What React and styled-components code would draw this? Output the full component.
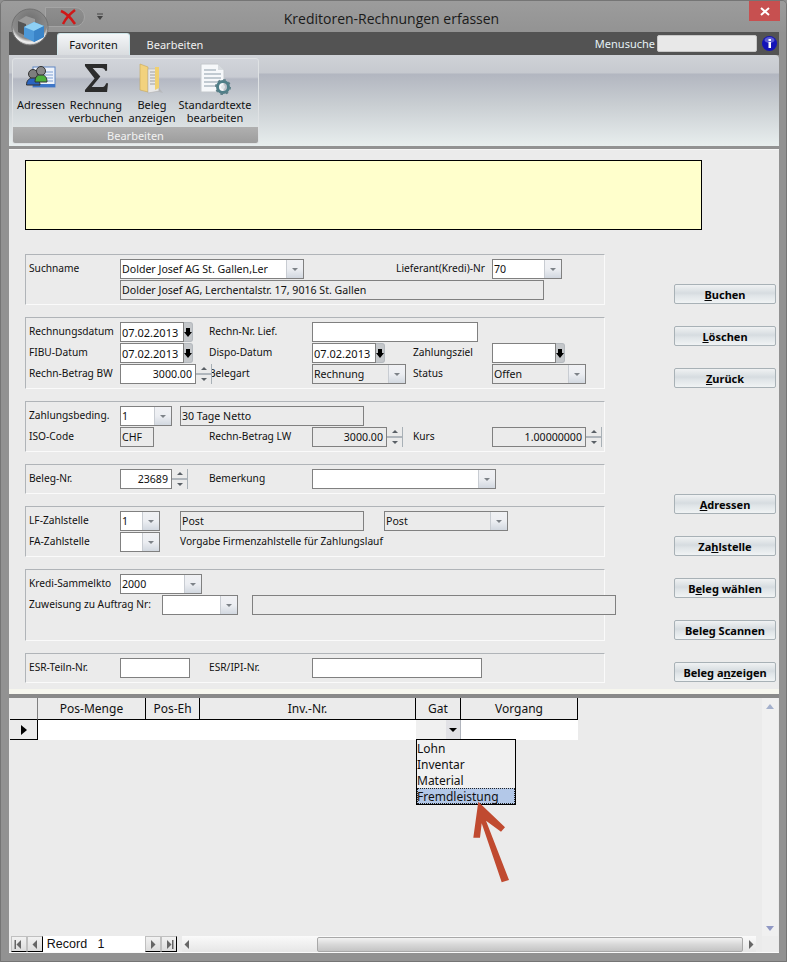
import React from 'react';
import styled, { createGlobalStyle } from 'styled-components';

const Global = createGlobalStyle`
  html, body { margin: 0; padding: 0; background: #8f8f8f; }
  * { box-sizing: border-box; }
  body { font-family: "Noto Sans", "DejaVu Sans", sans-serif; font-size: 11px; color: #111; }
`;

const Window = styled.div`
  position: relative;
  width: 787px;
  height: 962px;
  overflow: hidden;
  display: flex;
  flex-direction: column;
  background: #929292;
  border: 1px solid #757575;
  border-radius: 5px 5px 0 0;
  padding-bottom: 8px;
`;

// title bar
const TitleBar = styled.div`
  height: 31px;
  flex: none;
  display: grid;
  grid-template-columns: 1fr auto 1fr;
  align-items: start;
  background: linear-gradient(#9c9c9c, #939393);
`;
const QuickBar = styled.div`
  display: flex;
  align-items: center;
  gap: 11px;
  padding: 6px 0 0 44px;
`;
const QuickPill = styled.div`
  width: 40px;
  height: 20px;
  border: 1px solid #a4a4a4;
  border-radius: 0 10px 10px 0;
  background: linear-gradient(#8e8e8e, #848484);
  display: flex;
  align-items: center;
  justify-content: flex-end;
  padding-right: 7px;
`;
const Title = styled.div`
  padding: 8px 4px 0 0;
  font-family: "Open Sans", "Noto Sans", sans-serif;
  font-size: 14px;
  line-height: 19px;
  color: #1a1a1a;
`;
const CloseBox = styled.div`
  justify-self: end;
  width: 31px;
  height: 20px;
  margin-right: 6px;
  background: #c75050;
  display: flex;
  align-items: center;
  justify-content: center;
`;
const Orb = styled.svg`
  position: absolute;
  left: 10px;
  top: 6px;
  z-index: 2;
`;

// ribbon
const Chrome = styled.div`
  flex: 1;
  min-height: 0;
  margin: 0 7px 0 8px;
  display: flex;
  flex-direction: column;
`;
const TabStrip = styled.div`
  height: 23px;
  flex: none;
  background: #535353;
  display: flex;
  align-items: flex-end;
  padding-left: 48px;
`;
const Tab = styled.div`
  height: 22px;
  width: ${p => p.$w}px;
  display: flex;
  align-items: center;
  justify-content: center;
  border-radius: 3px 3px 0 0;
  color: ${p => (p.$active ? '#111' : '#f0f0f0')};
  background: ${p => (p.$active ? 'linear-gradient(#f4f6f8, #d9dcdf)' : 'none')};
  border: ${p => (p.$active ? '1px solid #cfe6ea' : '0')};
  border-bottom: 0;
  margin-right: ${p => (p.$active ? '8px' : '0')};
`;
const Search = styled.div`
  margin: 0 0 0 auto;
  align-self: center;
  display: flex;
  align-items: center;
  color: #e6f2f6;
  padding-right: 2px;
`;
const SearchInput = styled.div`
  width: 100px;
  height: 17px;
  margin: 0 5px 0 2px;
  background: #e8e8e8;
  border: 1px solid #c8c8c8;
  border-radius: 2px;
`;
const Ribbon = styled.div`
  height: 91px;
  flex: none;
  padding: 3px 0 0 3px;
  background: linear-gradient(#cfd2d7 0, #c6c9cf 18px, #b2b6c0 19px, #c9ced2 50px, #e8eeee 100%);
  border-radius: 0 4px 0 0;
`;
const RibbonGroup = styled.div`
  width: 247px;
  height: 86px;
  display: flex;
  flex-direction: column;
  border: 1px solid #dfe2e4;
  border-radius: 3px;
  overflow: hidden;
  background: linear-gradient(#d1d4da 0, #c8cbd2 18px, #b4b8c3 20px, #cdd2d6 45px, #e6ecec 100%);
`;
const RibbonItems = styled.div`
  flex: 1;
  display: grid;
  grid-template-columns: 56px 54px 58px 68px;
`;
const RibbonItem = styled.div`
  display: flex;
  flex-direction: column;
  align-items: center;
  text-align: center;
  color: #111;
`;
const RibbonIcon = styled.div`
  height: 39px;
  padding-top: ${p => p.$top || 4}px;
`;
const RibbonLine = styled.span`
  display: block;
  height: 13px;
  line-height: 13px;
  white-space: nowrap;
`;
const RibbonCaption = styled.div`
  height: 16px;
  flex: none;
  display: flex;
  align-items: center;
  justify-content: center;
  color: #f2f2f2;
  background: linear-gradient(#b0b0b0, #9d9d9d);
`;

// body
const Body = styled.div`
  flex: 1;
  min-height: 0;
  margin-top: 3px;
  display: flex;
  flex-direction: column;
  background: #ebebeb;
  border-top: 1px solid #f6f6f6;
  border-bottom: 1px solid #fafafa;
`;
const FormArea = styled.div`
  height: 544px;
  flex: none;
  padding: 10px 0 0 16px;
  border-bottom: 5px solid #f6f6ee;
`;
const Notice = styled.div`
  width: 677px;
  height: 70px;
  background: #ffffcc;
  border: 1px solid #000;
  margin-bottom: 24px;
`;
const FormColumns = styled.div`
  display: flex;
`;
const Groups = styled.div`
  width: 580px;
  display: flex;
  flex-direction: column;
  gap: 12px;
`;
const Group = styled.div`
  display: flex;
  flex-direction: column;
  gap: 1px;
  padding: 4px 0 4px 3px;
  min-height: ${p => p.$min || 0}px;
  border-top: 1px solid #b0b4b8;
  border-left: 1px solid #b0b4b8;
  border-right: 1px solid #fafafa;
  border-bottom: 1px solid #fafafa;
`;
const Row = styled.div`
  height: 20px;
  display: grid;
  grid-template-columns: 91px 89px 103px 101px 79px 112px;
  align-items: center;
`;
const Label = styled.div`
  grid-column: ${p => p.$col || 'auto'};
  align-self: center;
  padding: 0 ${p => p.$padRight || 0}px 3px 0;
  font-size: 10.2px;
  white-space: nowrap;
  line-height: 14px;
  text-align: ${p => (p.$right ? 'right' : 'left')};
`;
const Cell = styled.div`
  grid-column: ${p => p.$col || 'auto'};
  display: flex;
  align-items: stretch;
  height: 20px;
  gap: ${p => p.$gap || 0}px;
  padding-left: ${p => p.$pad || 0}px;
`;
const Box = styled.div`
  width: ${p => p.$w}px;
  height: 20px;
  flex: none;
  display: flex;
  align-items: center;
  justify-content: ${p => (p.$right ? 'flex-end' : 'flex-start')};
  padding: 0 3px 0 1px;
  border: 1px solid #808080;
  background: ${p => (p.$grey ? '#ebebeb' : '#fff')};
  font-size: ${p => (p.$date ? 11 : 10.6)}px;
  white-space: nowrap;
  overflow: hidden;
`;
const ComboWrap = styled.div`
  width: ${p => p.$w}px;
  height: 20px;
  flex: none;
  display: flex;
  border: 1px solid #808080;
  background: ${p => (p.$grey ? '#ebebeb' : '#fff')};
  font-size: 10.6px;
`;
const ComboText = styled.div`
  flex: 1;
  min-width: 0;
  padding-left: 1px;
  display: flex;
  align-items: center;
  white-space: nowrap;
  overflow: hidden;
`;
const ComboBtn = styled.div`
  width: 17px;
  flex: none;
  display: flex;
  align-items: center;
  justify-content: center;
  background: linear-gradient(#f0f1f4, #eceef2 50%, #d2d8e0);
  border-left: 1px solid #c8ccd2;
`;
const Caret = styled.span`
  width: 0;
  height: 0;
  border-left: 3px solid transparent;
  border-right: 3px solid transparent;
  border-top: 3px solid #7d8288;
`;
const DateBtn = styled.div`
  width: 9px;
  height: 20px;
  flex: none;
  display: flex;
  align-items: center;
  justify-content: center;
  background: #c4c7ca;
  border: 1px solid #b4b9be;
  border-left: 0;
  border-radius: 0 3px 3px 0;
`;
const SpinBox = styled.div`
  position: relative;
  z-index: 1;
  width: 16px;
  height: 20px;
  flex: none;
  display: flex;
  flex-direction: column;
  background: #ebebeb;
  border-right: 1px solid #a8b0b6;
`;
const SpinPart = styled.div`
  flex: 1;
  display: flex;
  align-items: center;
  justify-content: center;
  & + & { border-top: 2px solid #b0b6bc; }
`;
const Tri = styled.span`
  width: 0;
  height: 0;
  border-left: 3px solid transparent;
  border-right: 3px solid transparent;
  ${p => (p.$up ? 'border-bottom: 3px solid #5a6066;' : 'border-top: 3px solid #5a6066;')}
`;
const Buttons = styled.div`
  margin: 30px 0 0 69px;
  width: 102px;
  display: flex;
  flex-direction: column;
  gap: 22px;
`;
const ActionBtn = styled.div`
  height: 20px;
  margin-bottom: ${p => p.$after || 0}px;
  display: flex;
  align-items: center;
  justify-content: center;
  font-weight: 700;
  font-size: 11px;
  color: #050505;
  border: 1px solid #a8b1b6;
  border-radius: 2px;
  background: linear-gradient(#f0f2f3, #d6dce0 45%, #e0e5e8 60%, #f0f3f4);
`;

// grid
const GridArea = styled.div`
  position: relative;
  flex: 1;
  min-height: 0;
  border-top: 4px solid #898989;
  display: flex;
  flex-direction: column;
`;
const GridMain = styled.div`
  flex: 1;
  min-height: 0;
  display: flex;
  justify-content: space-between;
  padding-left: 1px;
`;
const GridTable = styled.div`
  display: grid;
  grid-template-columns: 28px 108px 54px 216px 45px 117px;
  grid-template-rows: 22px 20px;
`;
const HeadCell = styled.div`
  display: flex;
  align-items: center;
  justify-content: center;
  font-size: 12px;
  border-right: 1px solid ${p => (p.$corner ? '#808080' : '#000')};
  border-bottom: 1px solid #000;
`;
const Selector = styled.div`
  display: flex;
  align-items: center;
  justify-content: center;
  border-right: 1px solid #000;
  border-bottom: 1px solid #000;
`;
const SelectorArrow = styled.span`
  width: 0;
  height: 0;
  border-top: 5px solid transparent;
  border-bottom: 5px solid transparent;
  border-left: 6px solid #000;
`;
const DataCell = styled.div`
  background: ${p => (p.$shade ? '#f0f0f0' : '#fff')};
  display: flex;
  justify-content: flex-end;
`;
const DropBtn = styled.div`
  width: 15px;
  display: flex;
  align-items: center;
  justify-content: center;
  background: #e2e2e6;
  border-right: 1px solid #b0b4bc;
  border-bottom: 1px solid #b0b4bc;
`;
const DropCaret = styled.span`
  width: 0;
  height: 0;
  border-left: 4px solid transparent;
  border-right: 4px solid transparent;
  border-top: 4px solid #000;
`;
const Popup = styled.div`
  position: absolute;
  left: 407px;
  top: 41px;
  width: 100px;
  height: 66px;
  background: #f0f0f0;
  border: 1px solid #000;
  z-index: 3;
  font-size: 12px;
`;
const PopupItem = styled.div`
  height: 16px;
  line-height: 18px;
  white-space: nowrap;
  ${p => p.$sel && 'background: #b3c8e8; outline: 1px dotted #222; outline-offset: -1px;'}
`;
const PointerArrow = styled.svg`
  position: absolute;
  left: 456px;
  top: 97px;
  z-index: 4;
`;
const VScroll = styled.div`
  width: 16px;
  flex: none;
  margin-right: 1px;
  background: #f0f0f0;
  display: flex;
  flex-direction: column;
  justify-content: space-between;
  align-items: center;
  padding: 6px 0 5px;
`;
const ScrollTri = styled.span`
  width: 0;
  height: 0;
  border-left: 4px solid transparent;
  border-right: 4px solid transparent;
  ${p => (p.$up ? 'border-bottom: 5px solid #a4b0cc;' : 'border-top: 5px solid #9098c4;')}
`;
const NavBar = styled.div`
  height: 16px;
  flex: none;
  display: flex;
  padding-left: 2px;
`;
const NavBtn = styled.div`
  width: ${p => p.$w || 16}px;
  display: flex;
  align-items: center;
  justify-content: center;
  background: linear-gradient(#f2f2f2, #dcdcdc);
  border: 1px solid #c0c0c0;
  border-bottom: 1px solid #000;
  ${p => p.$end && 'border-right: 1px solid #000;'}
`;
const NavText = styled.div`
  width: ${p => p.$w}px;
  padding-left: ${p => p.$pad || 0}px;
  background: #fff;
  display: flex;
  align-items: center;
  font-family: "Liberation Sans", Arial, sans-serif;
  font-size: 12.5px;
`;
const HTrack = styled.div`
  flex: 1;
  margin-left: 5px;
  display: flex;
  align-items: center;
  background: linear-gradient(#fafafa, #e6e6e6);
`;
const HThumb = styled.div`
  width: 426px;
  height: 15px;
  margin: 0 4px 0 126px;
  border: 1px solid #a8a8a8;
  border-radius: 2px;
  background: linear-gradient(#f2f2f2, #d8d8d8 50%, #c4c4c4);
`;
const Corner = styled.div`
  width: 16px;
  margin: 0 1px 0 6px;
  background: #ededed;
`;

const Combo = ({ w, value, grey }) => (
  <ComboWrap $w={w} $grey={grey}>
    <ComboText>{value}</ComboText>
    <ComboBtn><Caret /></ComboBtn>
  </ComboWrap>
);

const DateSpin = () => (
  <DateBtn>
    <svg width="8" height="9" viewBox="0 0 8 9"><path d="M2 0h4v4h2L4 9 0 4h2z" fill="#000" /></svg>
  </DateBtn>
);

const Spinner = () => (
  <SpinBox>
    <SpinPart><Tri $up /></SpinPart>
    <SpinPart><Tri /></SpinPart>
  </SpinBox>
);

const NavTri = ({ dir, bar }) => (
  <svg width="9" height="9" viewBox="0 0 9 9">
    {dir === 'l'
      ? <path d="M7 0v9L2.500 4.500z" fill="#666" />
      : <path d="M2 0v9l4.500-4.500z" fill="#666" />}
    {bar && <rect x={dir === 'l' ? 0.5 : 7} y="0" width="1.500" height="9" fill="#666" />}
  </svg>
);

const AddressIcon = () => (
  <svg width="30" height="26" viewBox="0 0 30 26">
    <rect x="7" y="3" width="22" height="20" fill="#eef3fb" stroke="#5e86c4" />
    <rect x="7" y="20" width="22" height="3" fill="#3e76c8" />
    <path d="M18 8h9M18 11h9M18 14h9M18 17h9" stroke="#7d9fd4" />
    <circle cx="7" cy="10" r="4.500" fill="#7e7e7e" stroke="#333" />
    <path d="M0.500 21c0-5 3-7 6.500-7s7 2 7 7z" fill="#2a64c0" stroke="#333" />
    <circle cx="15" cy="7" r="4.500" fill="#8a8a8a" stroke="#333" />
    <path d="M9 18c0-5 2-7 6-7s6 2 6 7z" fill="#4cb03c" stroke="#333" />
  </svg>
);

const SigmaIcon = () => (
  <svg width="25" height="29" viewBox="0 0 26 30">
    <path d="M1 1h23v7h-2c-.5-2-1.500-3-4-3H9l8 9-9 11h10c3 0 4-1 5-4h2l-1 9H1v-2l10-12L1 3z" fill="#2c2c2c" />
  </svg>
);

const FolderIcon = () => (
  <svg width="30" height="32" viewBox="0 0 30 32">
    <path d="M16 27l10 3-6-8z" fill="#b0b0b0" opacity=".6" />
    <path d="M3 1l8 3v25L3 27z" fill="#f2d27e" stroke="#c8a858" strokeWidth=".6" />
    <path d="M11 6h10l1 22-11 2z" fill="#e8e8e8" stroke="#b0b0b0" strokeWidth=".6" />
    <path d="M13 9h7M13 12h7M13 15h7M13 18h7M13 21h7" stroke="#a0a0a0" />
    <path d="M18 4h4v21l-4 2z" fill="#f0d070" />
  </svg>
);

const DocGearIcon = () => (
  <svg width="34" height="32" viewBox="0 0 34 32">
    <path d="M3 1h17l6 6v22H3z" fill="#f6f8fa" stroke="#c4c8cc" />
    <path d="M20 1v6h6z" fill="#d8dce0" />
    <path d="M6 7h12M6 11h17M6 15h17M6 19h14M6 23h12" stroke="#b0bac4" strokeWidth="1.500" />
    <circle cx="25" cy="24" r="5.500" fill="none" stroke="#4f7f88" strokeWidth="3" />
    <circle cx="25" cy="24" r="7" fill="none" stroke="#5d7f88" strokeWidth="2" strokeDasharray="2.500 3" />
    <circle cx="25" cy="24" r="2" fill="#e0e6e8" />
  </svg>
);

export default function App() {
  return (
    <>
      <Global />
      <Window>
        <Orb width="40" height="40" viewBox="0 0 40 40">
          <defs>
            <radialGradient id="ring" cx="50%" cy="35%" r="65%">
              <stop offset="0" stopColor="#6d6d6d" />
              <stop offset=".75" stopColor="#8b8b8b" />
              <stop offset=".88" stopColor="#f2f2f2" />
              <stop offset="1" stopColor="#c8c8c8" />
            </radialGradient>
          </defs>
          <circle cx="19" cy="20" r="18" fill="url(#ring)" stroke="#707070" />
          <path d="M7 14l8-5 9 3v6l-9 3-8-2z" fill="#9a9a9a" />
          <path d="M7 14l8 3v12l-8-4z" fill="#555" />
          <path d="M13 20l10-5 10 4v11l-10 5-10-5z" fill="#4c98d8" />
          <path d="M13 20l10 4 10-5-10-4z" fill="#8fd0f4" />
          <path d="M23 24v11l10-5V19z" fill="#3a84c8" />
        </Orb>
        <TitleBar>
          <QuickBar>
            <QuickPill>
              <svg width="17" height="16" viewBox="0 0 17 16">
                <path d="M1 2c5 2 10 7 14 13M15 1C11 4 6 9 3 15" fill="none" stroke="#d01818" strokeWidth="2.500" />
              </svg>
            </QuickPill>
            <svg width="8" height="8" viewBox="0 0 8 8">
              <path d="M1 1h6" stroke="#444" />
              <path d="M1 3h6L4 7z" fill="#444" />
            </svg>
          </QuickBar>
          <Title>Kreditoren-Rechnungen erfassen</Title>
          <CloseBox>
            <svg width="10" height="9" viewBox="0 0 10 9">
              <path d="M1 1l8 7M9 1L1 8" stroke="#fff" strokeWidth="2" />
            </svg>
          </CloseBox>
        </TitleBar>
        <Chrome>
          <TabStrip>
            <Tab $active $w={73}>Favoriten</Tab>
            <Tab $w={74}>Bearbeiten</Tab>
            <Search>
              Menusuche
              <SearchInput />
              <svg width="15" height="15" viewBox="0 0 15 15">
                <circle cx="7.500" cy="7.500" r="7.500" fill="#1414b8" />
                <ellipse cx="7.500" cy="4" rx="5" ry="3" fill="#7c7ce0" opacity=".7" />
                <rect x="6.500" y="6" width="2.500" height="6" fill="#fff" />
                <rect x="6.500" y="3" width="2.500" height="2" fill="#fff" />
              </svg>
            </Search>
          </TabStrip>
          <Ribbon>
            <RibbonGroup>
              <RibbonItems>
                <RibbonItem>
                  <RibbonIcon $top={5}><AddressIcon /></RibbonIcon>
                  <RibbonLine>Adressen</RibbonLine>
                </RibbonItem>
                <RibbonItem>
                  <RibbonIcon><SigmaIcon /></RibbonIcon>
                  <RibbonLine>Rechnung</RibbonLine>
                  <RibbonLine>verbuchen</RibbonLine>
                </RibbonItem>
                <RibbonItem>
                  <RibbonIcon><FolderIcon /></RibbonIcon>
                  <RibbonLine>Beleg</RibbonLine>
                  <RibbonLine>anzeigen</RibbonLine>
                </RibbonItem>
                <RibbonItem>
                  <RibbonIcon><DocGearIcon /></RibbonIcon>
                  <RibbonLine>Standardtexte</RibbonLine>
                  <RibbonLine>bearbeiten</RibbonLine>
                </RibbonItem>
              </RibbonItems>
              <RibbonCaption>Bearbeiten</RibbonCaption>
            </RibbonGroup>
          </Ribbon>
          <Body>
            <FormArea>
              <Notice />
              <FormColumns>
                <Groups>
                  <Group>
                    <Row>
                      <Label>Suchname</Label>
                      <Cell $col="2 / 4"><Combo w={184} value="Dolder Josef AG St. Gallen,Ler" /></Cell>
                      <Label $col="4 / 6" $right $padRight={7}>Lieferant(Kredi)-Nr</Label>
                      <Cell $col="6"><Combo w={70} value="70" /></Cell>
                    </Row>
                    <Row>
                      <Cell $col="2 / -1"><Box $w={424} $grey>Dolder Josef AG, Lerchentalstr. 17, 9016 St. Gallen</Box></Cell>
                    </Row>
                  </Group>
                  <Group>
                    <Row>
                      <Label>Rechnungsdatum</Label>
                      <Cell><Box $w={64} $date>07.02.2013</Box><DateSpin /></Cell>
                      <Label>Rechn-Nr. Lief.</Label>
                      <Cell $col="4 / 6"><Box $w={166} /></Cell>
                    </Row>
                    <Row>
                      <Label>FIBU-Datum</Label>
                      <Cell><Box $w={64} $date>07.02.2013</Box><DateSpin /></Cell>
                      <Label>Dispo-Datum</Label>
                      <Cell><Box $w={64} $date>07.02.2013</Box><DateSpin /></Cell>
                      <Label>Zahlungsziel</Label>
                      <Cell><Box $w={64} /><DateSpin /></Cell>
                    </Row>
                    <Row>
                      <Label>Rechn-Betrag BW</Label>
                      <Cell><Box $w={76} $right>3000.00</Box><Spinner /></Cell>
                      <Label>Belegart</Label>
                      <Cell><Combo w={94} value="Rechnung" grey /></Cell>
                      <Label>Status</Label>
                      <Cell><Combo w={94} value="Offen" grey /></Cell>
                    </Row>
                  </Group>
                  <Group>
                    <Row>
                      <Label>Zahlungsbeding.</Label>
                      <Cell $col="2 / 5" $gap={8}>
                        <Combo w={52} value="1" />
                        <Box $w={184} $grey>30 Tage Netto</Box>
                      </Cell>
                    </Row>
                    <Row>
                      <Label>ISO-Code</Label>
                      <Cell><Box $w={34} $grey>CHF</Box></Cell>
                      <Label>Rechn-Betrag LW</Label>
                      <Cell><Box $w={75} $grey $right>3000.00</Box><Spinner /></Cell>
                      <Label>Kurs</Label>
                      <Cell><Box $w={94} $grey $right>1.00000000</Box><Spinner /></Cell>
                    </Row>
                  </Group>
                  <Group>
                    <Row>
                      <Label>Beleg-Nr.</Label>
                      <Cell><Box $w={52} $right>23689</Box><Spinner /></Cell>
                      <Label>Bemerkung</Label>
                      <Cell $col="4 / 6"><Combo w={184} value="" /></Cell>
                    </Row>
                  </Group>
                  <Group>
                    <Row>
                      <Label>LF-Zahlstelle</Label>
                      <Cell $col="2 / -1" $gap={20}>
                        <Combo w={40} value="1" />
                        <Box $w={184} $grey>Post</Box>
                        <Combo w={124} value="Post" grey />
                      </Cell>
                    </Row>
                    <Row>
                      <Label>FA-Zahlstelle</Label>
                      <Cell $col="2 / -1" $gap={20}>
                        <Combo w={40} value="" />
                        <Label>Vorgabe Firmenzahlstelle für Zahlungslauf</Label>
                      </Cell>
                    </Row>
                  </Group>
                  <Group $min={72}>
                    <Row>
                      <Label>Kredi-Sammelkto</Label>
                      <Cell $col="2 / 4"><Combo w={82} value="2000" /></Cell>
                    </Row>
                    <Row>
                      <Label>Zuweisung zu Auftrag Nr:</Label>
                      <Cell $col="2 / -1" $gap={14} $pad={42}>
                        <Combo w={76} value="" />
                        <Box $w={364} $grey />
                      </Cell>
                    </Row>
                  </Group>
                  <Group>
                    <Row>
                      <Label>ESR-Teiln-Nr.</Label>
                      <Cell><Box $w={70} /></Cell>
                      <Label>ESR/IPI-Nr.</Label>
                      <Cell $col="4 / 6"><Box $w={170} /></Cell>
                    </Row>
                  </Group>
                </Groups>
                <Buttons>
                  <ActionBtn><span><u>B</u>uchen</span></ActionBtn>
                  <ActionBtn><span><u>L</u>öschen</span></ActionBtn>
                  <ActionBtn $after={84}><span><u>Z</u>urück</span></ActionBtn>
                  <ActionBtn><span><u>A</u>dressen</span></ActionBtn>
                  <ActionBtn><span>Za<u>h</u>lstelle</span></ActionBtn>
                  <ActionBtn><span>B<u>e</u>leg wählen</span></ActionBtn>
                  <ActionBtn><span>Bele<u>g</u> Scannen</span></ActionBtn>
                  <ActionBtn><span>Beleg a<u>n</u>zeigen</span></ActionBtn>
                </Buttons>
              </FormColumns>
            </FormArea>
            <GridArea>
              <GridMain>
                <GridTable>
                  <HeadCell $corner />
                  <HeadCell>Pos-Menge</HeadCell>
                  <HeadCell>Pos-Eh</HeadCell>
                  <HeadCell>Inv.-Nr.</HeadCell>
                  <HeadCell>Gat</HeadCell>
                  <HeadCell>Vorgang</HeadCell>
                  <Selector><SelectorArrow /></Selector>
                  <DataCell />
                  <DataCell />
                  <DataCell />
                  <DataCell $shade><DropBtn><DropCaret /></DropBtn></DataCell>
                  <DataCell />
                </GridTable>
                <VScroll>
                  <ScrollTri $up />
                  <ScrollTri />
                </VScroll>
              </GridMain>
              <Popup>
                <PopupItem>Lohn</PopupItem>
                <PopupItem>Inventar</PopupItem>
                <PopupItem>Material</PopupItem>
                <PopupItem $sel>Fremdleistung</PopupItem>
              </Popup>
              <PointerArrow width="50" height="92" viewBox="0 0 50 92">
                <polygon
                  points="13.3,6.700 40,32.300 36,36.700 21,25.700 44,85 36.700,87.300 16.700,28.300 15,42.700 8.300,42.700"
                  fill="#c04a30"
                />
              </PointerArrow>
              <NavBar>
                <NavBtn><NavTri dir="l" bar /></NavBtn>
                <NavBtn $end><NavTri dir="l" /></NavBtn>
                <NavText $w={48} $pad={4}>Record</NavText>
                <NavText $w={55} $pad={7}>1</NavText>
                <NavBtn><NavTri dir="r" /></NavBtn>
                <NavBtn $end><NavTri dir="r" bar /></NavBtn>
                <HTrack>
                  <NavTri dir="l" />
                  <HThumb />
                  <NavTri dir="r" />
                </HTrack>
                <Corner />
              </NavBar>
            </GridArea>
          </Body>
        </Chrome>
      </Window>
    </>
  );
}
